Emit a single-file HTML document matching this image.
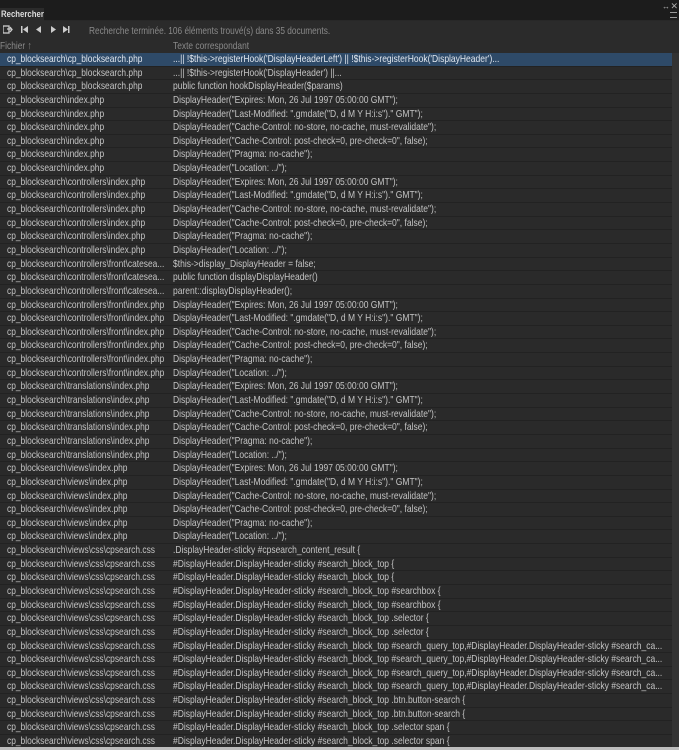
<!DOCTYPE html>
<html><head><meta charset="utf-8"><style>
*{margin:0;padding:0;box-sizing:border-box}
body{width:679px;height:750px;overflow:hidden;background:#282828;font-family:"Liberation Sans",sans-serif;font-size:10.5px;color:#c4c4c4;position:relative}
.top{position:absolute;left:0;top:0;width:679px;height:20px;background:#1c1c1c}
.tab{position:absolute;left:0;top:8px;height:13px;width:44px;background:#2b2b2b;color:#ddd;font-size:9.5px;font-weight:bold;padding-left:1px;line-height:13px}
.tab i{font-style:normal;display:inline-block;transform:scaleX(.82);transform-origin:left}
.tb{position:absolute;top:21px;left:0;width:679px;height:32px;background:#2b2b2b}
.st{position:absolute;left:89px;top:25px;color:#8a8a8a;font-size:10.5px;transform:scaleX(.79);transform-origin:left;white-space:nowrap}
.hd{position:absolute;top:40px;color:#8a8a8a;font-size:10.5px;transform:scaleX(.8);transform-origin:left;white-space:nowrap}
.rows{position:absolute;top:53px;left:0;width:672px}
.r{height:13.65px;line-height:13.65px;border-bottom:1px solid #222;white-space:nowrap;position:relative;overflow:hidden;background:#2a2a2a}
.r span{position:absolute;left:7px;transform:scaleX(.8);transform-origin:left}
.r b{font-weight:normal;position:absolute;left:173px;transform:scaleX(.81);transform-origin:left}
.sel{background:#2e4a68;color:#e0e6ee}
.sb{position:absolute;left:672px;top:53px;width:7px;height:697px;background:#333}
.bot{position:absolute;left:0;top:747px;width:679px;height:3px;background:#bdbdbd}
</style></head><body>
<div class="top"></div><div class="tab"><i>Rechercher</i></div>
<div style="position:absolute;right:9px;top:2px;color:#aaa;font-size:8px">↔</div>
<div style="position:absolute;right:1px;top:1px;color:#aaa;font-size:9px">✕</div>
<div style="position:absolute;right:2px;top:12px;width:7px;height:6px;border-top:1px solid #999;border-bottom:1px solid #999"></div>
<div class="tb"></div>
<svg style="position:absolute;left:3px;top:25px" width="68" height="10" fill="#ccc">
<rect x="0" y="1" width="6" height="7" fill="none" stroke="#ccc" stroke-width="1.3"/><path d="M4 4h5M7 2l2 2.5-2 2.5" stroke="#ccc" fill="none" stroke-width="1.3"/>
<rect x="18" y="1" width="1.5" height="7"/><path d="M25 1v7l-5-3.5z"/>
<path d="M38 1v7l-5-3.5z"/>
<path d="M48 1v7l5-3.5z"/>
<path d="M60 1v7l5-3.5z"/><rect x="65" y="1" width="1.5" height="7"/>
</svg>
<div class="st">Recherche terminée. 106 éléments trouvé(s) dans 35 documents.</div>
<div class="hd" style="left:0">Fichier ↑</div>
<div class="hd" style="left:173px">Texte correspondant</div>
<div class="rows">
<div class="r sel"><span>cp_blocksearch\cp_blocksearch.php</span><b>...|| !$this-&gt;registerHook('DisplayHeaderLeft') || !$this-&gt;registerHook('DisplayHeader')...</b></div>
<div class="r"><span>cp_blocksearch\cp_blocksearch.php</span><b>...|| !$this-&gt;registerHook('DisplayHeader') ||...</b></div>
<div class="r"><span>cp_blocksearch\cp_blocksearch.php</span><b>public function hookDisplayHeader($params)</b></div>
<div class="r"><span>cp_blocksearch\index.php</span><b>DisplayHeader("Expires: Mon, 26 Jul 1997 05:00:00 GMT");</b></div>
<div class="r"><span>cp_blocksearch\index.php</span><b>DisplayHeader("Last-Modified: ".gmdate("D, d M Y H:i:s")." GMT");</b></div>
<div class="r"><span>cp_blocksearch\index.php</span><b>DisplayHeader("Cache-Control: no-store, no-cache, must-revalidate");</b></div>
<div class="r"><span>cp_blocksearch\index.php</span><b>DisplayHeader("Cache-Control: post-check=0, pre-check=0", false);</b></div>
<div class="r"><span>cp_blocksearch\index.php</span><b>DisplayHeader("Pragma: no-cache");</b></div>
<div class="r"><span>cp_blocksearch\index.php</span><b>DisplayHeader("Location: ../");</b></div>
<div class="r"><span>cp_blocksearch\controllers\index.php</span><b>DisplayHeader("Expires: Mon, 26 Jul 1997 05:00:00 GMT");</b></div>
<div class="r"><span>cp_blocksearch\controllers\index.php</span><b>DisplayHeader("Last-Modified: ".gmdate("D, d M Y H:i:s")." GMT");</b></div>
<div class="r"><span>cp_blocksearch\controllers\index.php</span><b>DisplayHeader("Cache-Control: no-store, no-cache, must-revalidate");</b></div>
<div class="r"><span>cp_blocksearch\controllers\index.php</span><b>DisplayHeader("Cache-Control: post-check=0, pre-check=0", false);</b></div>
<div class="r"><span>cp_blocksearch\controllers\index.php</span><b>DisplayHeader("Pragma: no-cache");</b></div>
<div class="r"><span>cp_blocksearch\controllers\index.php</span><b>DisplayHeader("Location: ../");</b></div>
<div class="r"><span>cp_blocksearch\controllers\front\catesea...</span><b>$this-&gt;display_DisplayHeader = false;</b></div>
<div class="r"><span>cp_blocksearch\controllers\front\catesea...</span><b>public function displayDisplayHeader()</b></div>
<div class="r"><span>cp_blocksearch\controllers\front\catesea...</span><b>parent::displayDisplayHeader();</b></div>
<div class="r"><span>cp_blocksearch\controllers\front\index.php</span><b>DisplayHeader("Expires: Mon, 26 Jul 1997 05:00:00 GMT");</b></div>
<div class="r"><span>cp_blocksearch\controllers\front\index.php</span><b>DisplayHeader("Last-Modified: ".gmdate("D, d M Y H:i:s")." GMT");</b></div>
<div class="r"><span>cp_blocksearch\controllers\front\index.php</span><b>DisplayHeader("Cache-Control: no-store, no-cache, must-revalidate");</b></div>
<div class="r"><span>cp_blocksearch\controllers\front\index.php</span><b>DisplayHeader("Cache-Control: post-check=0, pre-check=0", false);</b></div>
<div class="r"><span>cp_blocksearch\controllers\front\index.php</span><b>DisplayHeader("Pragma: no-cache");</b></div>
<div class="r"><span>cp_blocksearch\controllers\front\index.php</span><b>DisplayHeader("Location: ../");</b></div>
<div class="r"><span>cp_blocksearch\translations\index.php</span><b>DisplayHeader("Expires: Mon, 26 Jul 1997 05:00:00 GMT");</b></div>
<div class="r"><span>cp_blocksearch\translations\index.php</span><b>DisplayHeader("Last-Modified: ".gmdate("D, d M Y H:i:s")." GMT");</b></div>
<div class="r"><span>cp_blocksearch\translations\index.php</span><b>DisplayHeader("Cache-Control: no-store, no-cache, must-revalidate");</b></div>
<div class="r"><span>cp_blocksearch\translations\index.php</span><b>DisplayHeader("Cache-Control: post-check=0, pre-check=0", false);</b></div>
<div class="r"><span>cp_blocksearch\translations\index.php</span><b>DisplayHeader("Pragma: no-cache");</b></div>
<div class="r"><span>cp_blocksearch\translations\index.php</span><b>DisplayHeader("Location: ../");</b></div>
<div class="r"><span>cp_blocksearch\views\index.php</span><b>DisplayHeader("Expires: Mon, 26 Jul 1997 05:00:00 GMT");</b></div>
<div class="r"><span>cp_blocksearch\views\index.php</span><b>DisplayHeader("Last-Modified: ".gmdate("D, d M Y H:i:s")." GMT");</b></div>
<div class="r"><span>cp_blocksearch\views\index.php</span><b>DisplayHeader("Cache-Control: no-store, no-cache, must-revalidate");</b></div>
<div class="r"><span>cp_blocksearch\views\index.php</span><b>DisplayHeader("Cache-Control: post-check=0, pre-check=0", false);</b></div>
<div class="r"><span>cp_blocksearch\views\index.php</span><b>DisplayHeader("Pragma: no-cache");</b></div>
<div class="r"><span>cp_blocksearch\views\index.php</span><b>DisplayHeader("Location: ../");</b></div>
<div class="r"><span>cp_blocksearch\views\css\cpsearch.css</span><b>.DisplayHeader-sticky #cpsearch_content_result {</b></div>
<div class="r"><span>cp_blocksearch\views\css\cpsearch.css</span><b>#DisplayHeader.DisplayHeader-sticky #search_block_top {</b></div>
<div class="r"><span>cp_blocksearch\views\css\cpsearch.css</span><b>#DisplayHeader.DisplayHeader-sticky #search_block_top {</b></div>
<div class="r"><span>cp_blocksearch\views\css\cpsearch.css</span><b>#DisplayHeader.DisplayHeader-sticky #search_block_top #searchbox {</b></div>
<div class="r"><span>cp_blocksearch\views\css\cpsearch.css</span><b>#DisplayHeader.DisplayHeader-sticky #search_block_top #searchbox {</b></div>
<div class="r"><span>cp_blocksearch\views\css\cpsearch.css</span><b>#DisplayHeader.DisplayHeader-sticky #search_block_top .selector {</b></div>
<div class="r"><span>cp_blocksearch\views\css\cpsearch.css</span><b>#DisplayHeader.DisplayHeader-sticky #search_block_top .selector {</b></div>
<div class="r"><span>cp_blocksearch\views\css\cpsearch.css</span><b>#DisplayHeader.DisplayHeader-sticky #search_block_top #search_query_top,#DisplayHeader.DisplayHeader-sticky #search_ca...</b></div>
<div class="r"><span>cp_blocksearch\views\css\cpsearch.css</span><b>#DisplayHeader.DisplayHeader-sticky #search_block_top #search_query_top,#DisplayHeader.DisplayHeader-sticky #search_ca...</b></div>
<div class="r"><span>cp_blocksearch\views\css\cpsearch.css</span><b>#DisplayHeader.DisplayHeader-sticky #search_block_top #search_query_top,#DisplayHeader.DisplayHeader-sticky #search_ca...</b></div>
<div class="r"><span>cp_blocksearch\views\css\cpsearch.css</span><b>#DisplayHeader.DisplayHeader-sticky #search_block_top #search_query_top,#DisplayHeader.DisplayHeader-sticky #search_ca...</b></div>
<div class="r"><span>cp_blocksearch\views\css\cpsearch.css</span><b>#DisplayHeader.DisplayHeader-sticky #search_block_top .btn.button-search {</b></div>
<div class="r"><span>cp_blocksearch\views\css\cpsearch.css</span><b>#DisplayHeader.DisplayHeader-sticky #search_block_top .btn.button-search {</b></div>
<div class="r"><span>cp_blocksearch\views\css\cpsearch.css</span><b>#DisplayHeader.DisplayHeader-sticky #search_block_top .selector span {</b></div>
<div class="r"><span>cp_blocksearch\views\css\cpsearch.css</span><b>#DisplayHeader.DisplayHeader-sticky #search_block_top .selector span {</b></div>
</div>
<div class="sb"></div>
<div class="bot"></div>
</body></html>
